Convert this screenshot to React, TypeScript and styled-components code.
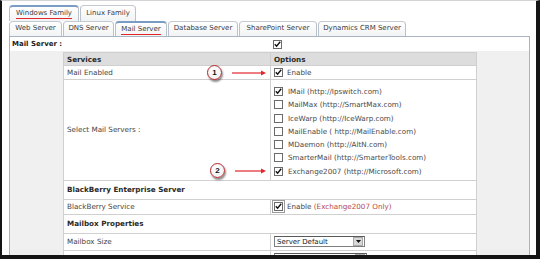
import React from "react";
import styled, { createGlobalStyle } from "styled-components";

const GlobalStyle = createGlobalStyle`
  html, body {
    margin: 0;
    padding: 0;
    background: #fff;
  }
  body {
    font-family: "DejaVu Sans", Verdana, sans-serif;
  }
`;

const Frame = styled.div`
  position: relative;
  width: 540px;
  height: 259px;
  box-sizing: border-box;
  border-top: 1px solid #d4d4d4;
  border-left: 2px solid #151515;
  border-right: 4px solid #151515;
  border-bottom: 4px solid #151515;
  background: #fff;
  overflow: hidden;
  padding: 4px 0 0 7px;
`;

const TabRow = styled.div<{ $h: number }>`
  display: flex;
  align-items: flex-end;
  gap: 1px;
  height: ${(p) => p.$h}px;
`;

const Tab = styled.div<{ $active?: boolean; $w: number }>`
  box-sizing: border-box;
  width: ${(p) => p.$w}px;
  height: 100%;
  display: flex;
  align-items: center;
  justify-content: center;
  border: 1px solid #b9c1ca;
  border-top: ${(p) => (p.$active ? "2px solid #7a9cc4" : "1px solid #c4cad1")};
  border-bottom: none;
  border-radius: 4px 4px 0 0;
  background: linear-gradient(#ffffff, #f2f3f4);
  font-size: 7px;
  color: #3c3c3c;
  white-space: nowrap;
`;

const TabLabel = styled.span<{ $active?: boolean }>`
  padding-bottom: 1px;
  border-bottom: 1px solid ${(p) => (p.$active ? "#e3262b" : "transparent")};
`;

const Panel = styled.div`
  box-sizing: border-box;
  width: 521px;
  border: 1px solid #a8b4c2;
  background: #fff;
`;

const TopRow = styled.div`
  display: flex;
  align-items: center;
  height: 14px;
  padding-left: 2px;
  font-size: 7px;
  font-weight: bold;
  color: #222;
`;

const TopLabel = styled.div`
  width: 261px;
`;

const Body = styled.div`
  display: flex;
  background: #f0f0f0;
  padding-top: 1px;
`;

const Side = styled.div`
  width: 53px;
  flex: none;
`;

const TableWrap = styled.div`
  position: relative;
  width: 413px;
  flex: none;
`;

const Table = styled.table`
  width: 413px;
  border-collapse: collapse;
  background: #fff;
  font-size: 7.2px;
  color: #444;
  table-layout: fixed;
`;

const HeadCell = styled.th`
  height: 12px;
  padding: 0 0 0 3px;
  background: #dddddd;
  border: 1px solid #cfcfcf;
  font-weight: bold;
  color: #2a2a2a;
  text-align: left;
`;

const Cell = styled.td<{ $h?: number }>`
  height: ${(p) => (p.$h ? `${p.$h}px` : "auto")};
  padding: 0 0 0 3px;
  border: 1px solid #d0d0d0;
  vertical-align: middle;
`;

const SectionCell = styled.td<{ $h: number }>`
  height: ${(p) => p.$h}px;
  padding: 0 0 0 3px;
  border: 1px solid #d0d0d0;
  font-weight: bold;
  color: #2a2a2a;
`;

const OptionList = styled.div`
  display: flex;
  flex-direction: column;
  padding: 5px 0 2px;
`;

const OptionItem = styled.div`
  display: flex;
  align-items: center;
  height: 13.25px;
  gap: 5px;
  color: #4a4a4a;
`;

const Inline = styled.div`
  display: flex;
  align-items: center;
  gap: 4px;
`;

const Box = styled.span<{ $framed?: boolean }>`
  box-sizing: border-box;
  display: inline-flex;
  align-items: center;
  justify-content: center;
  flex: none;
  width: 9px;
  height: 9px;
  border: 1px solid #6b6b6b;
  background: #fff;
  ${(p) => (p.$framed ? "outline: 1px solid #9a9a9a; outline-offset: 1px;" : "")}
`;

const Note = styled.span`
  color: #b8474a;
`;

const Select = styled.div<{ $w: number }>`
  box-sizing: border-box;
  display: flex;
  align-items: center;
  width: ${(p) => p.$w}px;
  height: 11px;
  border: 1px solid #7f7f7f;
  border-top-color: #5a5a5a;
  background: #fff;
  font-size: 7px;
  color: #222;
  padding-left: 2px;
`;

const SelectText = styled.span`
  flex: 1;
`;

const SelectButton = styled.span`
  box-sizing: border-box;
  width: 10px;
  height: 9px;
  margin-right: 1px;
  display: flex;
  align-items: center;
  justify-content: center;
  background: #d8d8d8;
  border: 1px solid #aaa;
`;

const Callout = styled.div<{ $x: number; $y: number }>`
  position: absolute;
  left: ${(p) => p.$x}px;
  top: ${(p) => p.$y}px;
  display: flex;
  align-items: center;
  gap: 10px;
`;

const Bubble = styled.div`
  box-sizing: border-box;
  width: 15px;
  height: 15px;
  border-radius: 50%;
  border: 1.5px solid #b3262b;
  background: radial-gradient(circle at 40% 35%, #ffffff, #ececec);
  box-shadow: 1px 2px 2px rgba(0, 0, 0, 0.45);
  display: flex;
  align-items: center;
  justify-content: center;
  font-size: 8px;
  font-weight: bold;
  color: #111;
  font-family: "Liberation Sans", Arial, sans-serif;
`;

const Check = ({ checked, framed }: { checked?: boolean; framed?: boolean }) => (
  <Box $framed={framed}>
    {checked && (
      <svg width="7" height="7" viewBox="0 0 7 7">
        <path d="M0.8 3.2 L2.6 5.2 L6.2 0.8" fill="none" stroke="#111" strokeWidth="1.4" />
      </svg>
    )}
  </Box>
);

const Arrow = ({ w }: { w: number }) => (
  <svg width={w} height="6" viewBox={`0 0 ${w} 6`}>
    <line x1="0" y1="3" x2={w - 4} y2="3" stroke="#e1262c" strokeWidth="1.2" />
    <path d={`M${w - 5} 0.5 L${w} 3 L${w - 5} 5.5 Z`} fill="#e1262c" />
  </svg>
);

const Dropdown = ({ w, text }: { w: number; text?: string }) => (
  <Select $w={w}>
    <SelectText>{text}</SelectText>
    <SelectButton>
      <svg width="5" height="3" viewBox="0 0 5 3">
        <path d="M0 0 L5 0 L2.5 3 Z" fill="#111" />
      </svg>
    </SelectButton>
  </Select>
);

const servers = [
  { name: "IMail (http://Ipswitch.com)", on: true },
  { name: "MailMax (http://SmartMax.com)", on: false },
  { name: "IceWarp (http://IceWarp.com)", on: false },
  { name: "MailEnable ( http://MailEnable.com)", on: false },
  { name: "MDaemon (http://AltN.com)", on: false },
  { name: "SmarterMail (http://SmarterTools.com)", on: false },
  { name: "Exchange2007 (http://Microsoft.com)", on: true },
];

const familyTabs = [
  { label: "Windows Family", w: 70, active: true },
  { label: "Linux Family", w: 56 },
];

const serverTabs = [
  { label: "Web Server", w: 53 },
  { label: "DNS Server", w: 51 },
  { label: "Mail Server", w: 52, active: true },
  { label: "Database Server", w: 70 },
  { label: "SharePoint Server", w: 78 },
  { label: "Dynamics CRM Server", w: 88 },
];

export default function App() {
  return (
    <>
      <GlobalStyle />
      <Frame>
        <TabRow $h={16}>
          {familyTabs.map((t) => (
            <Tab key={t.label} $w={t.w} $active={t.active}>
              <TabLabel $active={t.active}>{t.label}</TabLabel>
            </Tab>
          ))}
        </TabRow>
        <TabRow $h={15}>
          {serverTabs.map((t) => (
            <Tab key={t.label} $w={t.w} $active={t.active}>
              <TabLabel $active={t.active}>{t.label}</TabLabel>
            </Tab>
          ))}
        </TabRow>
        <Panel>
          <TopRow>
            <TopLabel>Mail Server :</TopLabel>
            <Check checked />
          </TopRow>
          <Body>
            <Side />
            <TableWrap>
              <Table>
                <colgroup>
                  <col style={{ width: 207 }} />
                  <col style={{ width: 206 }} />
                </colgroup>
                <thead>
                  <tr>
                    <HeadCell>Services</HeadCell>
                    <HeadCell>Options</HeadCell>
                  </tr>
                </thead>
                <tbody>
                  <tr>
                    <Cell $h={13}>Mail Enabled</Cell>
                    <Cell>
                      <Inline>
                        <Check checked />
                        <span>Enable</span>
                      </Inline>
                    </Cell>
                  </tr>
                  <tr>
                    <Cell>Select Mail Servers :</Cell>
                    <Cell>
                      <OptionList>
                        {servers.map((s) => (
                          <OptionItem key={s.name}>
                            <Check checked={s.on} />
                            <span>{s.name}</span>
                          </OptionItem>
                        ))}
                      </OptionList>
                    </Cell>
                  </tr>
                  <tr>
                    <SectionCell colSpan={2} $h={18}>
                      BlackBerry Enterprise Server
                    </SectionCell>
                  </tr>
                  <tr>
                    <Cell $h={14}>BlackBerry Service</Cell>
                    <Cell>
                      <Inline>
                        <Check checked framed />
                        <span>
                          Enable <Note>(Exchange2007 Only)</Note>
                        </span>
                      </Inline>
                    </Cell>
                  </tr>
                  <tr>
                    <SectionCell colSpan={2} $h={18}>
                      Mailbox Properties
                    </SectionCell>
                  </tr>
                  <tr>
                    <Cell $h={16}>Mailbox Size</Cell>
                    <Cell>
                      <Dropdown w={91} text="Server Default" />
                    </Cell>
                  </tr>
                  <tr>
                    <Cell $h={16}></Cell>
                    <Cell>
                      <Dropdown w={93} />
                    </Cell>
                  </tr>
                </tbody>
              </Table>
              <Callout $x={144} $y={13}>
                <Bubble>1</Bubble>
                <Arrow w={34} />
              </Callout>
              <Callout $x={147} $y={111}>
                <Bubble>2</Bubble>
                <Arrow w={31} />
              </Callout>
            </TableWrap>
            <Side />
          </Body>
        </Panel>
      </Frame>
    </>
  );
}
